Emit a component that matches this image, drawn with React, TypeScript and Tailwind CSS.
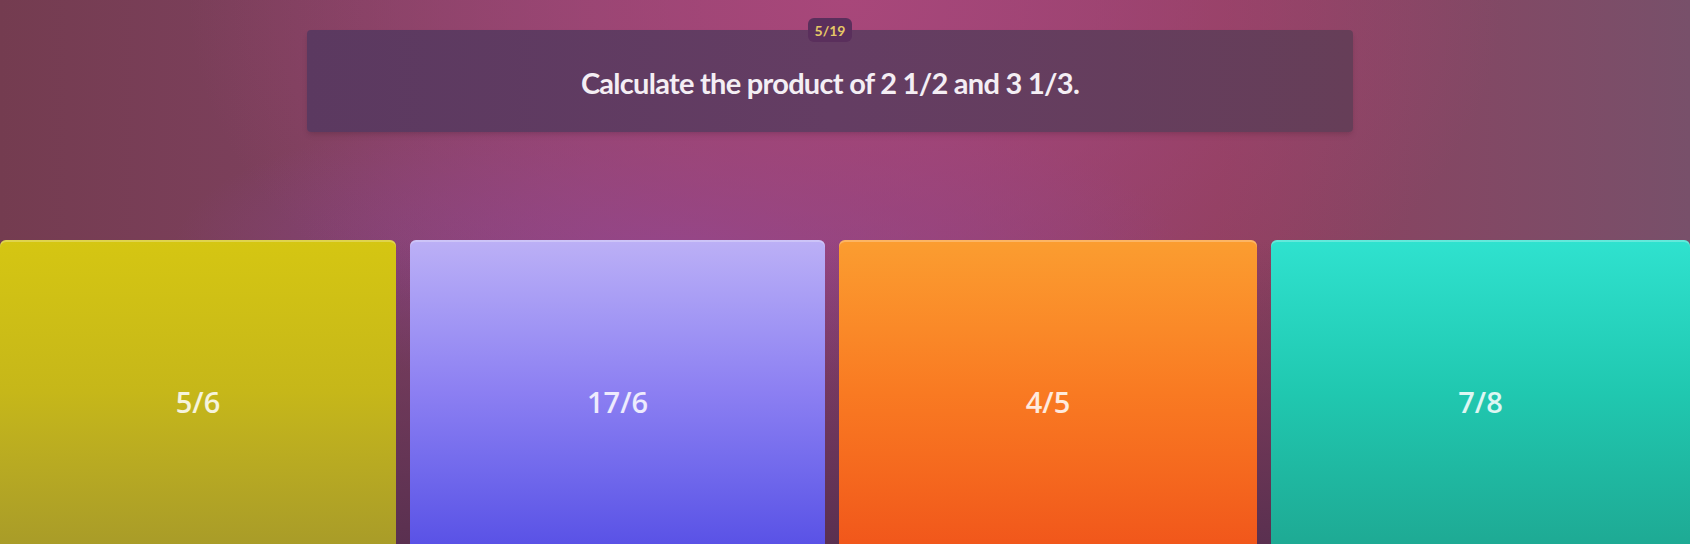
import React from "react";

interface Answer {
  label: string;
  width: string;
  color: string;
}

const answers: Answer[] = [
  { label: "5/6", width: "w-[396px]", color: "bg-linear-to-b from-[#d5c612] via-[#c6b719] to-[#a99c28]" },
  { label: "17/6", width: "w-[415px]", color: "bg-linear-to-b from-[#bcb0f6] via-[#8c7ff2] to-[#5a52e6]" },
  { label: "4/5", width: "w-[418px]", color: "bg-linear-to-b from-[#fb9d30] via-[#f97a22] to-[#f1571b]" },
  { label: "7/8", width: "flex-1", color: "bg-linear-to-b from-[#2fe2cf] via-[#20c8b0] to-[#1eaa94]" },
];

const App: React.FC = () => {
  return (
    <div
      className="relative flex h-[544px] w-full flex-col overflow-hidden bg-[radial-gradient(ellipse_at_50%_0%,#a8477a_0%,transparent_55%),radial-gradient(ellipse_at_40%_45%,#8a4590_0%,transparent_35%),linear-gradient(90deg,#743c50_0%,#86446a_35%,#8e4070_55%,#8f3f5e_72%,#78506a_100%)]"
      style={{ fontFamily: "Lato, 'Noto Sans', sans-serif" }}
    >
      {/* Question panel */}
      <div className="pt-[30px]">
        <div className="relative ml-[307px] flex h-[102px] w-[1046px] items-center justify-center rounded-sm bg-linear-to-r from-[#5b3960] via-[#643d63] to-[#663e58] shadow-md">
          <div className="absolute left-1/2 top-0 flex h-[24px] w-[44px] -translate-x-1/2 -translate-y-1/2 items-center justify-center rounded-md bg-[#5a2f5c] text-[14px] font-bold text-[#e6c766]">
            5/19
          </div>
          <p className="pt-[4px] text-[29px] font-bold tracking-tight text-[#f4eef4]">
            Calculate the product of 2 1/2 and 3 1/3.
          </p>
        </div>
      </div>

      {/* Answer cards */}
      <div className="mt-[108px] flex flex-1 gap-[14px] bg-linear-to-b from-transparent to-[#5a3050]">
        {answers.map((a) => (
          <div
            key={a.label}
            className={`${a.width} ${a.color} flex items-center justify-center rounded-t-md pt-[20px] shadow-[inset_0_2px_0_rgba(255,255,255,0.25)]`}
          >
            <span
              className="text-[29px] font-semibold text-white/85"
              style={{ fontFamily: "'Open Sans', 'Noto Sans', sans-serif" }}
            >
              {a.label}
            </span>
          </div>
        ))}
      </div>
    </div>
  );
};

export default App;
